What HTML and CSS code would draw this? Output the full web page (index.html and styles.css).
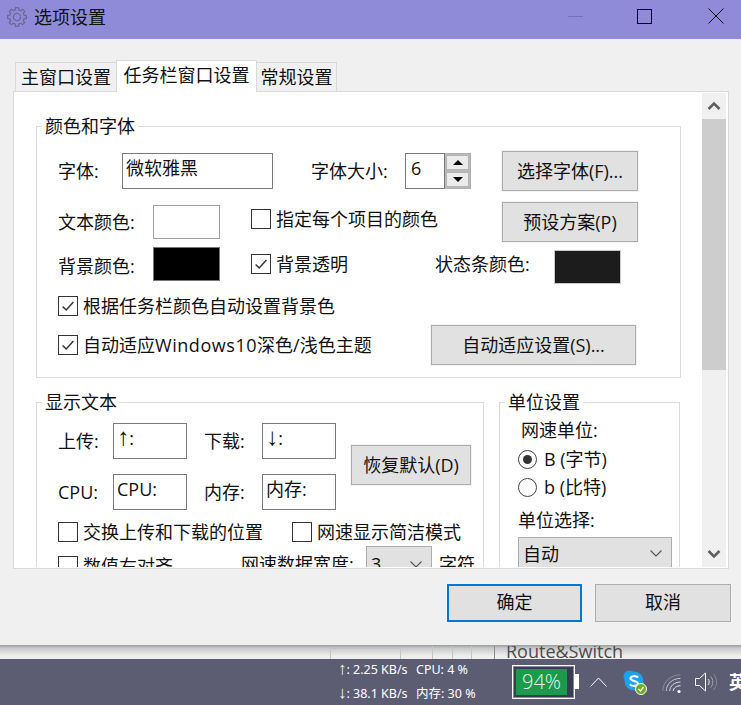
FILE: index.html
```html
<!DOCTYPE html>
<html lang="zh-CN">
<head>
<meta charset="utf-8">
<title>选项设置</title>
<link rel="stylesheet" href="styles.css">
</head>
<body>
<div class="screen">
  <header class="titlebar">
    <svg class="gear" width="20" height="20" viewBox="0 0 20 20"><path d="M17.08 8.23L19.38 8.51V11.49L17.08 11.77L16.26 13.76L17.69 15.58L15.58 17.69L13.76 16.26L11.77 17.08L11.49 19.38H8.51L8.23 17.08L6.24 16.26L4.42 17.69L2.31 15.58L3.74 13.76L2.92 11.77L.62 11.49V8.51L2.92 8.23L3.74 6.24L2.31 4.42L4.42 2.31L6.24 3.74L8.23 2.92L8.51 .62H11.49L11.77 2.92L13.76 3.74L15.58 2.31L17.69 4.42L16.26 6.24Z"/><circle cx="10" cy="10" r="3.6"/></svg>
    <span class="title">选项设置</span>
    <span class="win-min"></span>
    <span class="win-max"></span>
    <svg class="win-close" width="16" height="16" viewBox="0 0 16 16"><path d="M.5 .5L15.5 15.5M15.5 .5L.5 15.5"/></svg>
  </header>

  <main class="dialog">
    <nav class="tabs">
      <span class="tab tab-main">主窗口设置</span>
      <span class="tab tab-active">任务栏窗口设置</span>
      <span class="tab tab-general">常规设置</span>
    </nav>

    <section class="panel">
      <div class="scroller">
        <div class="group group-font">
          <span class="legend">颜色和字体</span>
          <div class="row row-1">
            <span class="lbl w64">字体:</span>
            <span class="input font-input">微软雅黑</span>
            <span class="lbl w94 ml38">字体大小:</span>
            <span class="spin">
              <span class="input spin-input">6</span>
              <span class="spin-btns">
                <span class="spin-btn"><i class="tri-up"></i></span>
                <span class="spin-btn"><i class="tri-down"></i></span>
              </span>
            </span>
            <span class="btn w136 ml31">选择字体(F)...</span>
          </div>
          <div class="row row-2">
            <span class="lbl w95">文本颜色:</span>
            <span class="swatch swatch-white"></span>
            <span class="check w251 ml31 raise3"><span class="box"></span>指定每个项目的颜色</span>
            <span class="btn w136">预设方案(P)</span>
          </div>
          <div class="row row-3">
            <span class="lbl w95">背景颜色:</span>
            <span class="swatch swatch-black top"></span>
            <span class="check w184 ml31 raise2"><span class="box"><svg class="tick" viewBox="0 0 20 20"><path d="M4 10.5L8 14.5L16 5.5"/></svg></span>背景透明</span>
            <span class="lbl w119 raise2">状态条颜色:</span>
            <span class="swatch swatch-dark bottom"></span>
          </div>
          <div class="row row-4">
            <span class="check"><span class="box"><svg class="tick" viewBox="0 0 20 20"><path d="M4 10.5L8 14.5L16 5.5"/></svg></span>根据任务栏颜色自动设置背景色</span>
          </div>
          <div class="row row-5">
            <span class="check w373"><span class="box"><svg class="tick" viewBox="0 0 20 20"><path d="M4 10.5L8 14.5L16 5.5"/></svg></span><span>自动适应<span class="wide">Windows10</span>深色/浅色主题</span></span>
            <span class="btn w205">自动适应设置(S)...</span>
          </div>
        </div>

        <div class="lower">
          <div class="group group-text">
            <span class="legend">显示文本</span>
            <div class="text-top">
              <div class="text-fields">
                <div class="row">
                  <span class="lbl w55">上传:</span>
                  <span class="input field"><span class="arrow">↑</span>:</span>
                  <span class="lbl w58 ml17">下载:</span>
                  <span class="input field"><span class="arrow">↓</span>:</span>
                </div>
                <div class="row row-cpu">
                  <span class="lbl w55">CPU:</span>
                  <span class="input field">CPU:</span>
                  <span class="lbl w58 ml17">内存:</span>
                  <span class="input field">内存:</span>
                </div>
              </div>
              <span class="btn w120 restore">恢复默认(D)</span>
            </div>
            <div class="row row-swap">
              <span class="check w234"><span class="box"></span>交换上传和下载的位置</span>
              <span class="check"><span class="box"></span>网速显示简洁模式</span>
            </div>
            <div class="row row-align">
              <span class="check w183 check-low"><span class="box"></span>数值右对齐</span>
              <span class="lbl w125 lbl-low">网速数据宽度:</span>
              <span class="select select-width">3<svg class="chev" width="12" height="7" viewBox="0 0 12 7"><path d="M.5 .5L6 6L11.5 .5"/></svg></span>
              <span class="lbl lbl-low ml7">字符</span>
            </div>
          </div>

          <div class="group group-unit">
            <span class="legend">单位设置</span>
            <div class="unit-head">网速单位:</div>
            <div class="radio-row radio-first"><span class="radio radio-on"></span>B (字节)</div>
            <div class="radio-row radio-second"><span class="radio"></span>b (比特)</div>
            <div class="unit-sub">单位选择:</div>
            <span class="select select-unit">自动<svg class="chev" width="12" height="7" viewBox="0 0 12 7"><path d="M.5 .5L6 6L11.5 .5"/></svg></span>
          </div>
        </div>
      </div>
      <aside class="scrollbar">
        <span class="sb-btn"><svg width="14" height="10" viewBox="0 0 14 10"><path d="M1.5 8L7 2.5L12.5 8"/></svg></span>
        <span class="sb-thumb"></span>
        <span class="sb-rest"></span>
        <span class="sb-btn sb-down"><svg width="14" height="10" viewBox="0 0 14 10"><path d="M1.5 2L7 7.5L12.5 2"/></svg></span>
      </aside>
    </section>

    <footer class="actions">
      <span class="btn action action-ok">确定</span>
      <span class="btn action">取消</span>
    </footer>
  </main>

  <div class="strip">
    <span class="bg-box"></span>
    <span class="bg-line l1"></span>
    <span class="bg-line l2"></span>
    <span class="bg-line l3"></span>
    <span class="bg-line l4"></span>
    <span class="bg-text">Route&amp;Switch</span>
  </div>

  <div class="taskbar">
    <div class="stats">
      <span><span class="arrow">↑</span>: 2.25 KB/s</span><span>CPU: 4 %</span>
      <span><span class="arrow">↓</span>: 38.1 KB/s</span><span>内存: 30 %</span>
    </div>
    <div class="battery">
      <div class="battery-body"><span class="battery-fill">94%</span></div>
      <span class="battery-nub"></span>
    </div>
    <svg class="tray-chev" width="17" height="10" viewBox="0 0 17 10"><path d="M.5 9.5L8.5 1L16.5 9.5"/></svg>
    <svg class="tray-skype" width="24" height="25" viewBox="0 0 24 25">
      <circle cx="6.5" cy="6.5" r="6" fill="#1aa3e8"/>
      <circle cx="15" cy="15" r="6" fill="#1aa3e8"/>
      <circle cx="11" cy="11" r="9.5" fill="#1aa3e8"/>
      <path d="M15 7.5C13.5 5.8 7.5 5.5 7.5 8.5C7.5 11.5 15 10.5 15 13.7C15 16.7 8.5 16.5 7 14.3" fill="none" stroke="#fff" stroke-width="2.2"/>
      <circle cx="18" cy="19" r="5.5" fill="#6fae1f" stroke="#fff"/>
      <path d="M15.5 19L17.5 21L20.5 17" fill="none" stroke="#fff" stroke-width="1.3"/>
    </svg>
    <svg class="tray-wifi" width="20" height="20" viewBox="0 0 20 20" fill="none">
      <path d="M.7 17C1 8 8 1 18.5 .8" stroke="#8d8d9c"/>
      <path d="M4.2 17C4.5 10 10 4.5 18.5 4.3" stroke="#c8c8d0"/>
      <path d="M7.7 17C8 12 12 8.2 18.5 8" stroke="#dcdce2"/>
      <path d="M11.2 17C11.5 14 14.5 11.8 18.5 11.7" stroke="#eee"/>
      <circle cx="17" cy="17.5" r="1.6" fill="#fff"/>
    </svg>
    <svg class="tray-vol" width="23" height="20" viewBox="0 0 23 20" fill="none">
      <path d="M.5 6.5H4.5L10.5 1V19L4.5 13.5H.5Z" stroke="#fff"/>
      <path d="M13 7C14.5 8.5 14.5 11.5 13 13" stroke="#e8e8ee"/>
      <path d="M15.8 4.5C18.4 7.5 18.4 12.5 15.8 15.5" stroke="#a8a8b6"/>
      <path d="M18.5 2C22.5 6.5 22.5 13.5 18.5 18" stroke="#8a8a9a"/>
    </svg>
    <span class="tray-ime">英</span>
  </div>
</div>
</body>
</html>
```
FILE: styles.css
```css
* { box-sizing: border-box; }
html, body { margin: 0; padding: 0; }
body {
  width: 741px;
  height: 705px;
  overflow: hidden;
  font-family: "Open Sans", "Noto Sans CJK SC", sans-serif;
  font-size: 18px;
  line-height: 24px;
  color: #111;
  background: #f0f0f0;
}
.screen { display: flex; flex-direction: column; width: 741px; height: 705px; overflow: hidden; }

.titlebar {
  flex: 0 0 39px;
  display: flex;
  align-items: center;
  background: #8f8bd8;
  padding-left: 7px;
}
.gear { margin-top: -5px; fill: none; stroke: #6a6a95; stroke-width: 1.3; }
.title { margin-left: 7px; margin-top: -6px; }
.win-min { width: 15px; height: 1px; margin-left: 462px; margin-top: -7px; background: #7471b4; }
.win-max { width: 15px; height: 15px; margin-left: 54px; margin-top: -7px; border: 1px solid #000; }
.win-close { margin-left: 56px; margin-top: -7px; fill: none; stroke: #111; stroke-width: 1; }

.dialog { flex: 0 0 607px; padding-top: 21px; background: #f0f0f0; border-bottom: 1px solid #9d99d8; }
.tabs { display: flex; align-items: flex-end; height: 31px; padding-left: 15px; }
.tab {
  display: flex;
  align-items: center;
  justify-content: center;
  height: 29px;
  background: #f0f0f0;
  border: 1px solid #d9d9d9;
  border-bottom: 0;
}
.tab-main { width: 101px; border-right: 0; }
.tab-active {
  position: relative;
  z-index: 1;
  width: 141px;
  height: 32px;
  margin-bottom: -1px;
  background: #fff;
  border-width: 1px 1px 0;
  padding-bottom: 3px;
}
.tab-general { width: 80px; border-left: 0; }

.panel {
  display: flex;
  width: 716px;
  height: 478px;
  margin-left: 13px;
  padding: 1px;
  background: #fff;
  border: 1px solid #d9d9d9;
}
.scroller { flex: 1; height: 474px; overflow: hidden; padding: 33px 0 0 21px; background: #fff; }

.group { position: relative; border: 1px solid #dcdcdc; }
.legend { position: absolute; top: -13px; left: 5px; padding: 0 3px; background: #fff; }
.group-font { width: 645px; height: 252px; padding: 24px 0 0 21px; }

.row { display: flex; align-items: center; }
.row-1, .row-2 { height: 40px; }
.row-2 { margin-top: 11px; }
.row-3 { height: 37px; margin-top: 5px; }
.row-4 { height: 20px; margin-top: 12px; }
.row-5 { height: 40px; margin-top: 9px; }

.lbl { display: block; flex: none; white-space: nowrap; }
.w55 { width: 55px; } .w58 { width: 58px; } .w64 { width: 64px; } .w94 { width: 94px; } .w95 { width: 95px; }
.w119 { width: 119px; } .w120 { width: 120px; } .w125 { width: 125px; } .w136 { width: 136px; }
.w183 { width: 183px; } .w184 { width: 184px; } .w205 { width: 205px; } .w234 { width: 234px; }
.w251 { width: 251px; } .w373 { width: 373px; }
.ml7 { margin-left: 7px; } .ml17 { margin-left: 17px; } .ml31 { margin-left: 31px; } .ml38 { margin-left: 38px; }
.raise2 { margin-top: -4px; }
.raise3 { margin-top: -6px; }
.wide { letter-spacing: .55px; }

.input { display: block; flex: none; padding: 0 3px; height: 36px; background: #fff; border: 1px solid #7a7a7a; line-height: 28px; white-space: nowrap; }
.font-input { width: 151px; }
.field { width: 74px; }
.arrow { font-family: "Liberation Sans", sans-serif; font-size: 1.35em; line-height: 0; }

.spin { display: flex; flex: none; width: 66px; height: 36px; }
.spin-input { width: 40px; padding-left: 5px; line-height: 29px; }
.spin-btns { display: flex; flex-direction: column; justify-content: space-between; width: 26px; padding: 1px; border: 1px solid #b0b0b0; border-left: 0; background: #b8b8b8; }
.spin-btn { display: flex; align-items: center; justify-content: center; height: 15px; background: #ebebeb; border: 1px solid #b4b4b4; }
.tri-up, .tri-down { width: 0; height: 0; border-left: 5px solid transparent; border-right: 5px solid transparent; }
.tri-up { border-bottom: 5px solid #000; }
.tri-down { border-top: 5px solid #000; }

.btn {
  display: flex;
  flex: none;
  align-items: center;
  justify-content: center;
  height: 40px;
  background: #e1e1e1;
  border: 1px solid #adadad;
  outline: 1px solid #f2f2f2;
  white-space: nowrap;
}

.swatch { display: block; flex: none; width: 67px; height: 34px; border: 1px solid #a0a0a0; }
.swatch-white { background: #fff; }
.swatch-black { background: #000; border-color: #767676; }
.swatch-dark { background: #1c1c1c; border-color: #c8c8c8; }
.top { align-self: flex-start; }
.bottom { align-self: flex-end; }

.check { display: flex; flex: none; align-items: center; white-space: nowrap; }
.box { display: block; flex: none; width: 20px; height: 20px; margin-right: 5px; background: #fff; border: 1px solid #333; }
.tick { display: block; width: 18px; height: 18px; fill: none; stroke: #333; stroke-width: 1.6; }

.lower { display: flex; gap: 15px; margin-top: 24px; }
.group-text { flex: none; width: 448px; height: 200px; padding: 20px 0 0 21px; }
.text-top { display: flex; align-items: center; }
.text-fields { flex: none; }
.row-cpu { margin-top: 15px; }
.restore { margin-left: 15px; margin-top: -3px; }
.row-swap { height: 20px; margin-top: 12px; }
.row-align { align-items: flex-start; margin-top: 4px; }
.check-low { margin-top: 8px; }
.lbl-low { margin-top: 6px; }
.select {
  display: flex;
  flex: none;
  align-items: center;
  justify-content: space-between;
  height: 36px;
  padding: 0 9px 0 4px;
  background: #e1e1e1;
  border: 1px solid #adadad;
}
.select-width { width: 66px; }
.select-unit { width: 154px; padding-bottom: 3px; }
.chev { fill: none; stroke: #555; stroke-width: 1.1; }

.group-unit { flex: none; width: 181px; height: 200px; padding: 15px 0 0 18px; }
.unit-head { margin-left: 3px; }
.radio-row { display: flex; align-items: center; height: 24px; }
.radio-first { margin-top: 5px; }
.radio-second { margin-top: 4px; }
.radio { position: relative; flex: none; width: 19px; height: 19px; margin-right: 7px; background: #fff; border: 1px solid #444; border-radius: 50%; }
.radio-on::after { content: ""; position: absolute; left: 4px; top: 4px; width: 9px; height: 9px; background: #333; border-radius: 50%; }
.unit-sub { margin-top: 9px; }
.select-unit { margin-top: 5px; }

.scrollbar { display: flex; flex-direction: column; flex: 0 0 24px; height: 474px; margin-right: 1px; background: #f0f0f0; }
.sb-btn { display: flex; align-items: center; justify-content: center; flex: 0 0 26px; }
.sb-btn svg { fill: none; stroke: #606060; stroke-width: 2.6; }
.sb-thumb { flex: 0 0 251px; background: #cdcdcd; }
.sb-rest { flex: 1; }

.actions { display: flex; justify-content: flex-end; gap: 13px; margin-top: 15px; padding-right: 10px; }
.action { width: 136px; height: 38px; padding-bottom: 2px; }
.action-ok { width: 135px; border: 2px solid #0078d7; }

.strip {
  position: relative;
  flex: 0 0 13px;
  overflow: hidden;
  background: linear-gradient(#a9a9b6 0, #c8c8c8 2px, #efefef 10px);
}
.bg-box { position: absolute; left: 330px; top: 2px; width: 71px; height: 14px; border: 1px solid #c4c4c4; }
.bg-line { position: absolute; top: 0; width: 1px; height: 13px; background: #c4c4c4; }
.l1 { left: 432px; } .l2 { left: 452px; } .l3 { left: 471px; } .l4 { left: 494px; background: #8c8c8c; }
.bg-text { position: absolute; left: 506px; top: -7px; color: #4c4c4c; white-space: nowrap; }

.taskbar {
  flex: 0 0 46px;
  display: flex;
  align-items: center;
  padding-left: 338px;
  overflow: hidden;
  background: #5c5c72;
  color: #fff;
}
.stats { display: grid; flex: none; grid-template-columns: 78px 96px; row-gap: 8px; font-family: "Noto Sans", "Noto Sans CJK SC", sans-serif; font-size: 12.5px; line-height: 16px; }
.battery { display: flex; flex: none; align-items: center; height: 34px; margin-top: -1px; }
.battery-body { display: flex; width: 63px; height: 34px; padding: 3px 4px 3px 3px; background: #3b3b55; border: 1px solid #fff; box-shadow: inset 0 0 0 1px rgba(255, 255, 255, .4); }
.battery-fill { display: flex; align-items: center; justify-content: center; width: 51px; background: #1a9a4b; font-family: "Open Sans", sans-serif; font-weight: 300; font-size: 20px; line-height: 24px; color: #f2f2f2; }
.battery-nub { display: block; width: 4px; height: 15px; background: #fff; }
.tray-chev { flex: none; margin-left: 11px; fill: none; stroke: #fff; stroke-width: 1; }
.tray-skype { flex: none; margin-left: 16px; }
.tray-wifi { flex: none; margin-left: 15px; margin-top: 3px; }
.tray-vol { flex: none; margin-left: 13px; margin-top: -1px; }
.tray-ime { flex: none; margin-left: 11px; font-weight: 700; }
```
